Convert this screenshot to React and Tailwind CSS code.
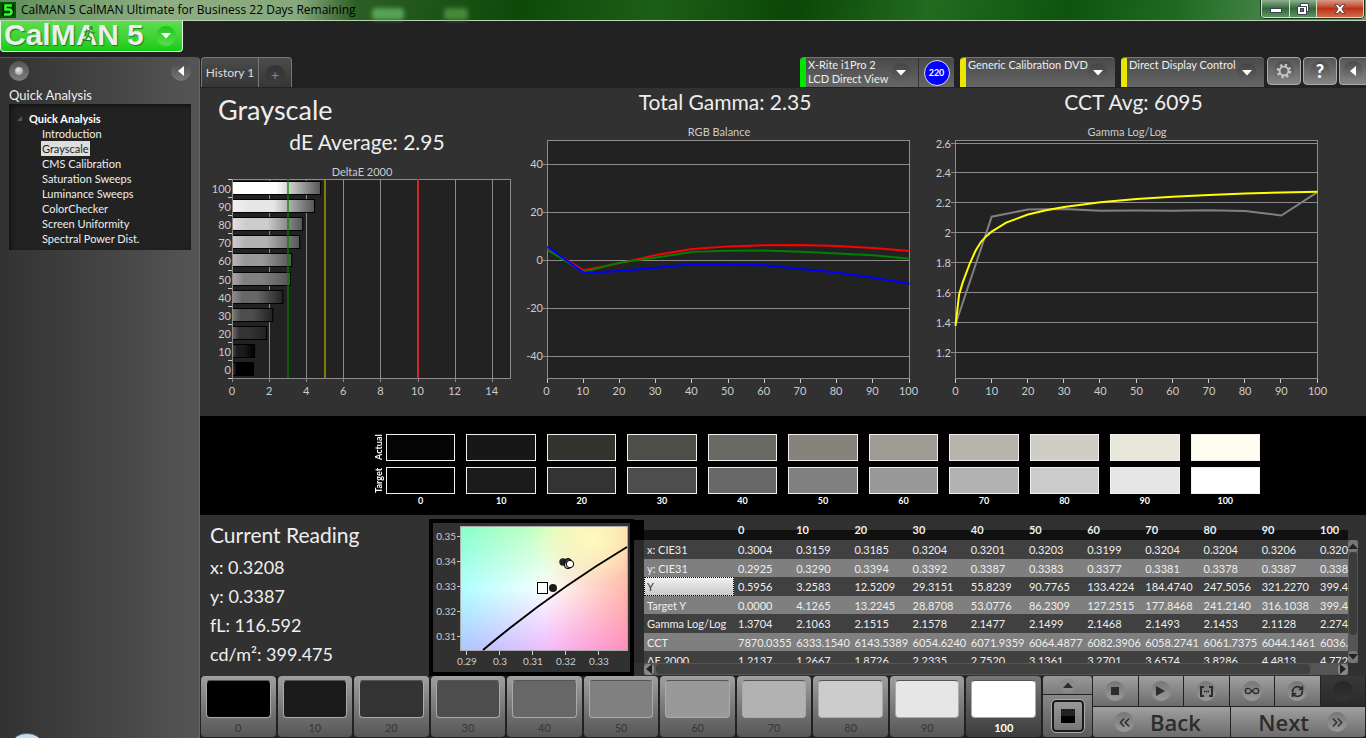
import React from "react"
import clsx from "clsx"
import { ChevronsLeft, ChevronsRight, Infinity as InfinityIcon, RefreshCw } from "lucide-react"

const Levels = [0, 10, 20, 30, 40, 50, 60, 70, 80, 90, 100];

const Pages = [
  "Introduction",
  "Grayscale",
  "CMS Calibration",
  "Saturation Sweeps",
  "Luminance Sweeps",
  "ColorChecker",
  "Screen Uniformity",
  "Spectral Power Dist."
]

const Actual = [
  "#040407", "#171717", "#33332d", "#4e4e48", "#6a6963", "#84827b",
  "#9d9b94", "#b6b4ab", "#cfcdc4", "#e9e7da", "#fffdf0"
]
const Target = [
  "#000000", "#1b1b1b", "#333333", "#4d4d4d", "#676767", "#808080",
  "#999999", "#b2b2b2", "#cccccc", "#e6e6e6", "#ffffff"
]
// left edge highlight of each DeltaE bar
const Highlight = [
  "#3c3c3c", "#4a4a4a", "#6a6a6a", "#7c7c7c", "#8c8c8c", "#a8a8a8",
  "#b8b8b8", "#cccccc", "#dedede", "#f0f0f0", "#ffffff"
]

const DeltaE = [1.16, 1.22, 1.86, 2.2, 2.74, 3.15, 3.22, 3.65, 3.81, 4.45, 4.78];

const RgbBalance = [
  { color: "#ff0000", values: [4.9, -4.3, -1.3, 2.1, 4.6, 5.7, 6.2, 6.3, 5.9, 5, 3.8] },
  { color: "#008000", values: [4.2, -5, -1.1, 1, 3.4, 3.9, 4, 3.5, 2.7, 2, 0.5] },
  { color: "#0000ff", values: [5.6, -5.3, -4.6, -3.2, -1.7, -1.9, -2.2, -3.8, -5.2, -7.4, -9.9] }
]

const GammaMeasured = [1.39, 2.11, 2.158, 2.162, 2.15, 2.152, 2.15, 2.153, 2.148, 2.118, 2.275];
const GammaTarget = [
  [0, 1.38], [1, 1.59], [2, 1.67], [4, 1.8], [5.5, 1.88], [7, 1.94], [8.5, 1.98], [10, 2.01],
  [14, 2.07], [20, 2.125], [25, 2.153], [30, 2.175], [40, 2.206], [50, 2.228],
  [60, 2.244], [70, 2.256], [80, 2.266], [90, 2.272], [100, 2.277]
]

const TableRows = [
  ["x: CIE31", "0.3004", "0.3159", "0.3185", "0.3204", "0.3201", "0.3203", "0.3199", "0.3204", "0.3204", "0.3206", "0.320"],
  ["y: CIE31", "0.2925", "0.3290", "0.3394", "0.3392", "0.3387", "0.3383", "0.3377", "0.3381", "0.3378", "0.3387", "0.338"],
  ["Y", "0.5956", "3.2583", "12.5209", "29.3151", "55.8239", "90.7765", "133.4224", "184.4740", "247.5056", "321.2270", "399.4"],
  ["Target Y", "0.0000", "4.1265", "13.2245", "28.8708", "53.0776", "86.2309", "127.2515", "177.8468", "241.2140", "316.1038", "399.4"],
  ["Gamma Log/Log", "1.3704", "2.1063", "2.1515", "2.1578", "2.1477", "2.1499", "2.1468", "2.1493", "2.1453", "2.1128", "2.274"],
  ["CCT", "7870.0355", "6333.1540", "6143.5389", "6054.6240", "6071.9359", "6064.4877", "6082.3906", "6058.2741", "6061.7375", "6044.1461", "6036."],
  ["ΔE 2000", "1.2137", "1.2667", "1.8726", "2.2335", "2.7520", "3.1361", "3.2701", "3.6574", "3.8286", "4.4813", "4.772"]
]

const DownArrow = ({ className }) => (
  <svg viewBox="0 0 10 6" className={ clsx("w-[10px] h-[6px]", className) }>
    <path d="M0 0H10L5 5.5Z" fill="currentColor"/>
  </svg>
)

const LeftArrow = ({ className }) => (
  <svg viewBox="0 0 6 10" className={ clsx("w-[6px] h-[10px]", className) }>
    <path d="M6 0V10L0 5Z" fill="currentColor"/>
  </svg>
)

const TitleBar = () => (
  <header className="flex items-start justify-between h-[21px] border-b border-[#b9d3b4] bg-[linear-gradient(100deg,#5f8f58_0%,#8fae83_12%,#86a87a_22%,#2c5f25_26%,#0d4a0a_38%,#1c5f18_48%,#0b4708_58%,#226b1f_68%,#0e5410_78%,#1f6a22_86%,#4c8850_94%,#6d9c6e_100%)]">
    <div className="flex items-center h-5">
      <svg viewBox="0 0 16 16" className="w-4 h-4">
        <rect width="16" height="16" fill="#022c02"/>
        <rect x="1" y="1" width="14" height="14" fill="none" stroke="#0a7a0a"/>
        <path d="M12 3.5H5.5V7.5H9Q11.5 7.5 11.5 10Q11.5 12.5 9 12.5H4" fill="none" stroke="#2bff2b" strokeWidth="2.6"/>
      </svg>
      <h1 className="pl-[5px] pr-2 text-[12px] leading-5 text-black font-['Open_Sans',sans-serif] whitespace-nowrap">
        CalMAN 5 CalMAN Ultimate for Business 22 Days Remaining
      </h1>
      <span className="w-8 h-3 mt-2 ml-2 rounded-sm bg-[#6cc06c]/70 blur-[2px]"/>
      <span className="w-6 h-3 mt-2 ml-10 rounded-sm bg-[#5aa04a]/70 blur-[2px]"/>
    </div>
    <div className="flex h-[18px] mr-[2px] border border-t-0 border-[#cfe0cd] rounded-b-[4px] overflow-hidden shadow-[0_0_0_1px_#16351a]">
      <button aria-label="Minimize" className="w-7 flex items-center justify-center border-r border-[#cfe0cd] bg-linear-to-b from-[#91b191] via-[#31683a] to-[#5f9262]">
        <svg viewBox="0 0 12 6" className="w-3 h-[6px] mt-1">
          <rect x="0.5" y="0.5" width="11" height="4" fill="#fff" stroke="#3c4350"/>
        </svg>
      </button>
      <button aria-label="Restore" className="w-[27px] flex items-center justify-center border-r border-[#cfe0cd] bg-linear-to-b from-[#91b191] via-[#31683a] to-[#5f9262]">
        <svg viewBox="0 0 12 12" className="w-3 h-3">
          <path d="M3.5 0.5H11.5V8.5H9.5V11.5H0.5V3.5H3.5Z" fill="#fff" stroke="#3c4350"/>
          <path d="M3.5 3.5H9.5V9" fill="none" stroke="#3c4350"/>
          <rect x="3.5" y="5.5" width="3" height="3" fill="#4d7c53" stroke="#3c4350"/>
        </svg>
      </button>
      <button aria-label="Close" className="w-[46px] flex items-center justify-center bg-linear-to-b from-[#d99a86] via-[#b93215] to-[#d2694b]">
        <svg viewBox="0 0 12 10" className="w-3 h-[10px]">
          <path d="M1 0.5H4L6 3L8 0.5H11L7.8 5L11 9.5H8L6 7L4 9.5H1L4.2 5Z" fill="#fff" stroke="#4a3038" strokeWidth="0.8"/>
        </svg>
      </button>
    </div>
  </header>
)

const Logo = () => (
  <button className="flex items-start justify-between w-[183px] h-[31px] pl-[3px] pr-[6px] border border-t-0 border-[#e5f7e2] rounded-b-[4px] bg-linear-to-b from-[#5fdc50] to-[#10cc10]">
    <span className="relative flex gap-[8px] text-[30px] leading-[28px] font-bold text-[#eceeec] font-['Liberation_Sans',Arial,sans-serif] [text-shadow:1px_1px_1px_#1b7a1b]">
      <span>CalMAN</span>
      <span>5</span>
      {/* runner standing in the second "A" */}
      <svg viewBox="0 0 14 17" className="absolute left-[78px] top-[5px] w-[14px] h-[17px]" fill="none" stroke="#2a9a2a" strokeWidth="1.5" strokeLinecap="round">
        <circle cx="9" cy="2" r="1.2" fill="#2a9a2a"/>
        <path d="M3 6L7 4.5L10 7L12.5 6.5M7.5 5L6 10L9.5 12L8.5 16M6 10L4 13L1 13.5"/>
      </svg>
    </span>
    <span className="w-5 h-5 mt-[5px] rounded-full bg-linear-to-b from-[#16c516] to-[#55e04a] flex items-center justify-center">
      <DownArrow className="text-white"/>
    </span>
  </button>
)

const Sidebar = () => (
  <aside className="w-[200px] shrink-0 flex flex-col rounded-tr-[4px] border-t border-r border-t-[#555] border-r-[#666] bg-linear-to-r from-[#323232] to-[#555]">
    <div className="flex justify-between px-2 pt-[3px]">
      <button aria-label="Record" className="w-5 h-5 ml-[1px] rounded-full bg-linear-to-b from-[#555] to-[#7d7d7d] flex items-center justify-center">
        <span className="w-2 h-2 rounded-full bg-[radial-gradient(circle_at_40%_35%,#e8e8e8,#8b8b8b)]"/>
      </button>
      <button aria-label="Collapse" className="w-5 h-5 rounded-full bg-linear-to-b from-[#4c4c4c] to-[#777] flex items-center justify-center">
        <LeftArrow className="text-white"/>
      </button>
    </div>
    <h2 className="pt-[5px] pl-[9px] text-[13px] leading-[18px] text-[#eee]">Quick Analysis</h2>
    <nav className="ml-[9px] mr-2 pt-[7px] pb-1 bg-[#222] shadow-[inset_2px_2px_4px_#111]">
      <p className="flex items-center pl-2 text-[11px] leading-[15px] font-bold text-white">
        <svg viewBox="0 0 5 5" className="w-[5px] h-[5px] mr-[7px]">
          <path d="M5 0V5H0Z" fill="#555"/>
        </svg>
        Quick Analysis
      </p>
      <ul className="text-[11px] leading-[15px] text-[#eee]">
        { Pages.map(p => (
            <li key={ p } className="pl-8">
              <a href="#"
                className={ clsx("inline-block px-[1px] h-[15px] align-top", {
                  "bg-[#dedede] text-[#222]": p === "Grayscale"
                }) }
              >
                { p }
              </a>
            </li>
          ))
        }
      </ul>
    </nav>
    <svg viewBox="0 0 26 5" className="w-[26px] h-[5px] mt-auto ml-[14px]">
      <ellipse cx="13" cy="9" rx="14" ry="8.5" fill="#c9dcec" stroke="#2f6a9c"/>
    </svg>
  </aside>
)

const DeviceTab = ({ color, lines, className, children }) => (
  <div className={ clsx("flex h-[30px] border-t border-[#777] rounded-t-[4px] overflow-hidden bg-linear-to-b from-[#4a4a4a] to-[#666]", className) }>
    <span className={ clsx("w-[6px] shrink-0", color) }/>
    <button className="flex-1 flex justify-between pl-[2px] pr-[7px] text-left">
      <span className="text-[11px] leading-[14px] text-[#eee] whitespace-nowrap">
        { lines.map(l => <span key={ l } className="block">{ l }</span>) }
      </span>
      <span className="w-5 h-5 mt-[5px] -ml-1 shrink-0 rounded-full bg-linear-to-b from-[#444] to-[#626262] flex items-center justify-center">
        <DownArrow className="text-white"/>
      </span>
    </button>
    { children }
  </div>
)

const ToolButton = ({ label, className, children }) => (
  <button aria-label={ label }
    className={ clsx("h-7 shrink-0 border border-[#aaa] rounded-[4px] bg-linear-to-b from-[#555] to-[#858585] flex items-center justify-center", className) }
  >
    <span className="w-5 h-5 rounded-full bg-linear-to-b from-[#4a4a4a] to-[#808080] text-white flex items-center justify-center">
      { children }
    </span>
  </button>
)

const TabBar = () => (
  <div className="flex justify-between h-[31px] pl-[1px] border-b border-[#222]">
    <div className="flex border border-b-0 border-[#777] rounded-t-[4px] bg-linear-to-b from-[#4c4c4c] to-[#363636] overflow-hidden">
      <button className="w-[57px] text-[12px] text-[#ddd] border-r border-[#777] whitespace-nowrap">History 1</button>
      <button aria-label="Add tab" className="w-8 flex items-center justify-center">
        <span className="w-5 h-5 mt-1 rounded-full bg-linear-to-b from-[#333] to-[#3d3d3d] text-[14px] leading-5 text-[#888]">+</span>
      </button>
    </div>
    <div className="flex">
      <DeviceTab color="bg-[#00e600]" lines={ ["X-Rite i1Pro 2", "LCD Direct View"] } className="w-[154px]">
        <span className="w-9 shrink-0 border-l border-[#333] flex items-center justify-center">
          <span className="w-[26px] h-[26px] rounded-full bg-[#0000ff] border border-[#ddd] text-[9px] leading-6 font-bold text-white text-center">220</span>
        </span>
      </DeviceTab>
      <DeviceTab color="bg-[#ece600]" lines={ ["Generic Calibration DVD"] } className="w-[155px] ml-[6px]"/>
      <DeviceTab color="bg-[#ece600]" lines={ ["Direct Display Control"] } className="w-[143px] ml-[6px]"/>
      <ToolButton label="Settings" className="w-[34px] ml-[3px]">
        <svg viewBox="0 0 16 16" className="w-4 h-4" fill="none" stroke="#c8c8c8">
          <circle cx="8" cy="8" r="6" strokeWidth="2.6" strokeDasharray="2.35 2.36"/>
          <circle cx="8" cy="8" r="4.4" strokeWidth="1.8"/>
        </svg>
      </ToolButton>
      <ToolButton label="Help" className="w-[34px] ml-[2px]">
        <span className="text-[18px] leading-5 font-black">?</span>
      </ToolButton>
      <ToolButton label="Collapse panel" className="w-[27px] ml-[2px] border-r-0 rounded-r-none">
        <LeftArrow/>
      </ToolButton>
    </div>
  </div>
)

const GridColor = "#8c8c8c";

const DeltaChart = () => {
  const x = v => 32 + v * 18.55;
  const rowY = i => 24 + (10 - i) * 18.1;
  return (
    <svg viewBox="0 0 325 260" className="w-full" fontSize="11" fill="#ccc">
      <defs>
        { Target.map((c, i) => (
            <linearGradient key={ c } id={ `bar-${ i }` }>
              <stop offset="0" stopColor={ Highlight[i] }/>
              <stop offset="0.2" stopColor={ c }/>
              <stop offset="0.5" stopColor={ c }/>
              <stop offset="1" stopColor={ i > 4 ? "#555" : i > 1 ? "#222" : "#000" }/>
            </linearGradient>
          ))
        }
      </defs>
      <text x="162" y="20" textAnchor="middle">DeltaE 2000</text>
      <rect x="32.5" y="23.5" width="278" height="199" fill="#222" stroke={ GridColor }/>
      { [0, 2, 4, 6, 8, 10, 12, 14].map(v => (
          <g key={ v }>
            <path d={ `M${ Math.round(x(v)) + 0.5 } 24V226` } stroke={ GridColor }/>
            <text x={ x(v) } y="239" textAnchor="middle">{ v }</text>
          </g>
        ))
      }
      { Levels.map((l, i) => (
          <g key={ l }>
            <path d={ `M28 ${ Math.round(rowY(i)) - 0.5 }H32` } stroke="#ccc"/>
            <rect x="32.5" y={ Math.round(rowY(i)) + 1.5 } width={ x(DeltaE[i]) - 32.5 } height="13" fill={ `url(#bar-${ i })` } stroke="#000"/>
            <text x="31" y={ rowY(i) + 13 } textAnchor="end">{ l }</text>
          </g>
        ))
      }
      <path d="M28 222.5H32" stroke="#ccc"/>
      <path d="M32.5 24V222" stroke={ GridColor }/>
      <path d="M88 23V222" stroke="#008000" strokeWidth="2" opacity="0.65"/>
      <path d="M125 23V222" stroke="#a39a00" strokeWidth="2" opacity="0.75"/>
      <path d="M218 23V222" stroke="#d02828" strokeWidth="2"/>
    </svg>
  )
}

const toPath = points => "M" + points.map(p => p.join(" ")).join("L");

const BalanceChart = () => {
  const x = v => 22.5 + v * 3.62;
  const y = v => 144 - v * 2.39;
  return (
    <svg viewBox="0 0 400 300" className="w-full" fontSize="11" fill="#ccc">
      <text x="194" y="20" textAnchor="middle">RGB Balance</text>
      <rect x="22.5" y="24.5" width="362" height="238" fill="#222" stroke={ GridColor }/>
      { [40, 20, 0, -20, -40].map(v => (
          <g key={ v }>
            <path d={ `M18 ${ Math.round(y(v)) + 0.5 }H384` } stroke={ GridColor }/>
            <text x="18" y={ y(v) + 4 } textAnchor="end">{ v }</text>
          </g>
        ))
      }
      { Levels.map(l => (
          <g key={ l }>
            <path d={ `M${ Math.round(x(l)) - 0.5 } 263V267` } stroke="#ccc"/>
            <text x={ x(l) - 1 } y="279" textAnchor="middle">{ l }</text>
          </g>
        ))
      }
      { RgbBalance.map(s => (
          <path key={ s.color }
            d={ toPath(s.values.map((v, i) => [x(i * 10), y(v)])) }
            fill="none" stroke={ s.color } strokeWidth="2"/>
        ))
      }
    </svg>
  )
}

const GammaChart = () => {
  const x = v => 30.5 + v * 3.62;
  const y = v => 27.5 + (2.6 - v) * 149.4;
  return (
    <svg viewBox="0 0 441 300" className="w-full" fontSize="11" fill="#ccc">
      <text x="202" y="20" textAnchor="middle">Gamma Log/Log</text>
      <rect x="30.5" y="24.5" width="362" height="238" fill="#222" stroke={ GridColor }/>
      { [2.6, 2.4, 2.2, 2, 1.8, 1.6, 1.4, 1.2].map(v => (
          <g key={ v }>
            <path d={ `M26 ${ Math.round(y(v)) - 0.5 }H392` } stroke={ GridColor }/>
            <text x="26" y={ y(v) + 4 } textAnchor="end">{ v }</text>
          </g>
        ))
      }
      { Levels.map(l => (
          <g key={ l }>
            <path d={ `M${ Math.round(x(l)) - 0.5 } 263V267` } stroke="#ccc"/>
            <text x={ x(l) } y="279" textAnchor="middle">{ l }</text>
          </g>
        ))
      }
      <path d={ toPath(GammaMeasured.map((v, i) => [x(i * 10), y(v)])) } fill="none" stroke="#808080" strokeWidth="2"/>
      <path d={ toPath(GammaTarget.map(([l, v]) => [x(l), y(v)])) } fill="none" stroke="#ffff00" strokeWidth="2"/>
    </svg>
  )
}

const Charts = () => (
  <section className="flex items-start bg-[#313131] text-[#eee]">
    <div className="flex-[325] pt-[2px]">
      <h2 className="pl-[18px] text-[27px] leading-10">Grayscale</h2>
      <h3 className="pl-[9px] mb-[2px] text-center text-[21px] leading-6">dE Average: 2.95</h3>
      <DeltaChart />
    </div>
    <div className="flex-[400] pt-[2px]">
      <h3 className="mb-[2px] text-center text-[21px] leading-6">Total Gamma: 2.35</h3>
      <BalanceChart />
    </div>
    <div className="flex-[441] pt-[2px]">
      <h3 className="mb-[2px] pr-6 text-center text-[21px] leading-6">CCT Avg: 6095</h3>
      <GammaChart />
    </div>
  </section>
)

const SwatchRow = ({ label, colors }) => (
  <div className="flex h-[27px]">
    <span className="w-[14px] shrink-0 rotate-180 [writing-mode:vertical-rl] text-[9px] leading-[14px] font-bold text-center">
      { label }
    </span>
    <div className="flex-1 grid grid-cols-11 gap-[11px]">
      { colors.map(c => (
          <span key={ c } className="border border-[#f0f0f0]" style={ { backgroundColor: c } }/>
        ))
      }
    </div>
  </div>
)

const Swatches = () => (
  <section className="h-[99px] pt-[18px] pl-[172px] pr-[106px] bg-black text-white">
    <div className="flex flex-col gap-[6px]">
      <SwatchRow label="Actual" colors={ Actual }/>
      <SwatchRow label="Target" colors={ Target }/>
    </div>
    <div className="grid grid-cols-11 gap-[11px] pl-[14px] text-center text-[9px] leading-[14px] font-bold">
      { Levels.map(l => <span key={ l }>{ l }</span>) }
    </div>
  </section>
)

const CieChart = () => (
  <div className="w-[205px] shrink-0 mt-1 border-4 border-black bg-[#313131]">
    <svg viewBox="0 0 197 148" className="w-full" fontSize="10" fill="#ccc">
      <defs>
        <linearGradient id="cie-left" x1="0" y1="0" x2="0" y2="1">
          <stop offset="0" stopColor="#86ffcb"/>
          <stop offset="0.5" stopColor="#aeffff"/>
          <stop offset="1" stopColor="#aac6ff"/>
        </linearGradient>
        <linearGradient id="cie-mid" x1="0" y1="0" x2="0" y2="1">
          <stop offset="0" stopColor="#d2ffc0"/>
          <stop offset="0.5" stopColor="#ffffff"/>
          <stop offset="1" stopColor="#f6bcff"/>
        </linearGradient>
        <linearGradient id="cie-right" x1="0" y1="0" x2="0" y2="1">
          <stop offset="0" stopColor="#ffd9a6"/>
          <stop offset="0.5" stopColor="#ffb8a8"/>
          <stop offset="1" stopColor="#ff8dba"/>
        </linearGradient>
        <linearGradient id="fade-left">
          <stop offset="0" stopColor="#fff"/>
          <stop offset="0.55" stopColor="#000"/>
        </linearGradient>
        <linearGradient id="fade-right">
          <stop offset="0.5" stopColor="#000"/>
          <stop offset="1" stopColor="#fff"/>
        </linearGradient>
        <radialGradient id="cie-yellow" cx="0.78" cy="0.1" r="0.35">
          <stop offset="0" stopColor="#fffac0"/>
          <stop offset="1" stopColor="#fffac0" stopOpacity="0"/>
        </radialGradient>
        <mask id="mask-left"><rect x="26" y="2" width="168" height="125" fill="url(#fade-left)"/></mask>
        <mask id="mask-right"><rect x="26" y="2" width="168" height="125" fill="url(#fade-right)"/></mask>
      </defs>
      <g transform="translate(1 1)">
        <rect x="27" y="3" width="166" height="123" fill="url(#cie-mid)"/>
        <rect x="27" y="3" width="166" height="123" fill="url(#cie-left)" mask="url(#mask-left)"/>
        <rect x="27" y="3" width="166" height="123" fill="url(#cie-right)" mask="url(#mask-right)"/>
        <rect x="27" y="3" width="166" height="123" fill="url(#cie-yellow)"/>
        <rect x="26.5" y="2.5" width="167" height="124" fill="none" stroke="#aaa"/>
        <path d="M49 126Q118 68 193 23" fill="none" stroke="#000" strokeWidth="2"/>
        <circle cx="129" cy="38" r="3.7" fill="#222"/>
        <circle cx="134" cy="38" r="3.5" fill="#444" stroke="#000"/>
        <circle cx="134" cy="41" r="3.7" fill="#bbb" stroke="#000"/>
        <circle cx="136" cy="40" r="3.7" fill="#fff" stroke="#000"/>
        <rect x="103.5" y="58.5" width="10" height="11" fill="#fff" stroke="#000"/>
        <circle cx="119" cy="64" r="4" fill="#1a1a1a"/>
        { ["0.35", "0.34", "0.33", "0.32", "0.31"].map((v, i) => (
            <g key={ v }>
              <path d={ `M23 ${ 12.5 + i * 25 }H26` } stroke="#ccc"/>
              <text x="22" y={ 16 + i * 25 } textAnchor="end">{ v }</text>
            </g>
          ))
        }
        { ["0.29", "0.3", "0.31", "0.32", "0.33"].map((v, i) => (
            <g key={ v }>
              <path d={ `M${ 32.5 + i * 33 } 127V131` } stroke="#ccc"/>
              <text x={ 33 + i * 33 } y="141" textAnchor="middle">{ v }</text>
            </g>
          ))
        }
      </g>
    </svg>
  </div>
)

const ReadingsTable = () => (
  <div className="flex-1 min-w-0 mt-[5px] mr-2 flex flex-col h-[155px]">
    <div className="flex-1 min-h-0 flex">
      <div className="w-[10px] shrink-0 border-t-[20px] border-black bg-[#2a2a2a]"/>
      <div className="flex-1 min-w-0 overflow-hidden">
        <table className="w-full table-fixed border-collapse text-[11px] text-[#eee] whitespace-nowrap">
          <thead>
            <tr className="h-5 bg-[linear-gradient(#303030_50%,#101010_50%)]">
              <th className="w-[90px]"/>
              { Levels.map(l => (
                  <th key={ l } className={ clsx("p-0 pl-1 text-left font-bold", { "w-8": l === 100 }) }>
                    { l }
                  </th>
                ))
              }
            </tr>
          </thead>
          <tbody>
            { TableRows.map(([name, ...values], r) => (
                <tr key={ name } className={ clsx(r % 2 ? "h-[18px] bg-[#7f7f7f]" : "h-[19px] bg-[#404040]") }>
                  <th className={ clsx("p-0 pl-[3px] text-left font-normal leading-[17px]", {
                      "bg-linear-to-b from-[#f2f2f2] to-[#c8c8c8] text-[#333] outline outline-dotted -outline-offset-1 outline-black": name === "Y"
                    }) }
                  >
                    { name }
                  </th>
                  { values.map((v, i) => (
                      <td key={ i } className="p-0 pl-1 leading-[17px]">{ v }</td>
                    ))
                  }
                </tr>
              ))
            }
          </tbody>
        </table>
      </div>
      <div className="w-[10px] shrink-0 mt-5 flex flex-col items-center bg-[#555]">
        <button aria-label="Scroll up" className="w-[10px] h-3 rounded-sm bg-[#777] flex items-center justify-center">
          <DownArrow className="w-[6px] h-[4px] rotate-180 text-[#222]"/>
        </button>
        <span className="w-2 h-[83px] rounded bg-[#3c3c3c]"/>
        <button aria-label="Scroll down" className="w-[10px] h-3 mt-auto rounded-sm bg-[#777] flex items-center justify-center">
          <DownArrow className="w-[6px] h-[4px] text-[#222]"/>
        </button>
      </div>
    </div>
    <div className="h-3 ml-[10px] mr-[10px] flex items-center bg-[#555]">
      <button aria-label="Scroll left" className="w-[10px] h-[11px] rounded-sm bg-[#888] flex items-center justify-center">
        <LeftArrow className="w-1 h-[7px] text-[#222]"/>
      </button>
      <span className="flex-1 h-[10px] ml-[2px] mr-[28px] rounded bg-[#404040]"/>
      <button aria-label="Scroll right" className="w-[10px] h-[11px] rounded-sm bg-[#888] flex items-center justify-center">
        <LeftArrow className="w-1 h-[7px] rotate-180 text-[#222]"/>
      </button>
    </div>
  </div>
)

const Readings = () => (
  <section className="flex h-[161px] bg-[#313131] text-[#eee]">
    <div className="w-[229px] shrink-0 pl-[10px] pt-[4px]">
      <h2 className="mb-[2px] text-[21px] leading-8">Current Reading</h2>
      <ul className="text-[18px] leading-[29px]">
        <li>x: 0.3208</li>
        <li>y: 0.3387</li>
        <li>fL: 116.592</li>
        <li>cd/m²: 399.475</li>
      </ul>
    </div>
    <CieChart />
    <ReadingsTable />
  </section>
)

const LevelButton = ({ level, color, active }) => (
  <button className={ clsx(
      "flex-1 flex flex-col pt-[4px] px-[5px] rounded-[4px] bg-linear-to-b text-[11px]",
      active ? "from-[#777] to-[#3c3c3c] text-white font-bold" : "from-[#a0a0a0] to-[#565656] text-[#3a3a3a] font-medium"
    ) }
  >
    <span className="w-full h-[38px] rounded-[4px] border border-[#aaa] border-t-[#555]" style={ { backgroundColor: color } }/>
    <span className="w-full pt-[1px] text-center leading-[18px]">{ level }</span>
  </button>
)

const ControlButton = ({ label, disabled, children }) => (
  <button aria-label={ label } disabled={ disabled }
    className={ clsx("flex-1 flex items-center justify-center bg-linear-to-b", disabled ? "from-[#383838] to-[#2a2a2a]" : "from-[#a0a0a0] to-[#6c6c6c]") }
  >
    <span className={ clsx("w-5 h-5 rounded-full bg-linear-to-b flex items-center justify-center text-[#2c2c2c]", disabled ? "from-[#262626] to-[#333]" : "from-[#777] to-[#999]") }>
      { children }
    </span>
  </button>
)

const Transport = () => (
  <footer className="flex h-[62px] pl-[1px] pb-[1px]">
    <div className="flex-1 flex gap-[2px] pr-[1px]">
      { Levels.map((l, i) => (
          <LevelButton key={ l } level={ l } color={ Target[i] } active={ l === 100 }/>
        ))
      }
    </div>
    <div className="w-[49px] shrink-0 ml-[1px] flex flex-col gap-[1px] rounded-[3px] overflow-hidden">
      <button aria-label="Expand" className="h-[18px] bg-linear-to-b from-[#999] to-[#7c7c7c] flex items-center justify-center">
        <span className="w-[15px] h-[15px] rounded-full bg-[#8a8a8a] flex items-center justify-center">
          <DownArrow className="w-2 h-[5px] rotate-180 text-[#2c2c2c]"/>
        </span>
      </button>
      <button aria-label="Pattern window" className="flex-1 bg-linear-to-b from-[#888] to-[#5a5a5a] flex items-center justify-center">
        <span className="w-8 h-8 rounded-[4px] border-2 border-[#1a1a1a] outline outline-[#aaa] bg-linear-to-b from-[#999] to-[#777] flex items-center justify-center">
          <span className="w-[14px] h-[14px] bg-[linear-gradient(#222_50%,#000_50%)]"/>
        </span>
      </button>
    </div>
    <div className="w-[272px] shrink-0 ml-[1px] mr-[1px] flex flex-col gap-[1px]">
      <div className="flex h-[30px] gap-[1px]">
        <ControlButton label="Stop"><span className="w-2 h-2 bg-[#2c2c2c]"/></ControlButton>
        <ControlButton label="Play">
          <svg viewBox="0 0 9 10" className="w-[9px] h-[10px]"><path d="M0 0L9 5L0 10Z" fill="currentColor"/></svg>
        </ControlButton>
        <ControlButton label="Read series">
          <svg viewBox="0 0 13 11" className="w-[13px] h-[11px]" fill="none" stroke="currentColor" strokeWidth="2">
            <path d="M4 1H1V10H4M9 1H12V10H9"/>
            <path d="M4 5.5H9" strokeWidth="1.6" strokeDasharray="1.4 0.5"/>
          </svg>
        </ControlButton>
        <ControlButton label="Read continuously"><InfinityIcon size={ 16 }/></ControlButton>
        <ControlButton label="Refresh"><RefreshCw size={ 13 } strokeWidth={ 3.5 }/></ControlButton>
        <ControlButton label="Idle" disabled/>
      </div>
      <div className="flex flex-1 gap-[1px] text-[22px] leading-[30px] text-[#2c2c2c] font-['Open_Sans',sans-serif] font-semibold">
        <button className="flex-1 flex items-center pl-[21px] gap-4 bg-linear-to-b from-[#a0a0a0] to-[#6c6c6c] rounded-bl-[3px]">
          <span className="w-5 h-5 rounded-full bg-linear-to-b from-[#777] to-[#999] flex items-center justify-center"><ChevronsLeft size={ 17 }/></span>
          Back
        </button>
        <button className="flex-1 flex items-center justify-end pr-[18px] gap-[18px] bg-linear-to-b from-[#a0a0a0] to-[#6c6c6c] rounded-br-[3px]">
          Next
          <span className="w-5 h-5 rounded-full bg-linear-to-b from-[#777] to-[#999] flex items-center justify-center"><ChevronsRight size={ 17 }/></span>
        </button>
      </div>
    </div>
  </footer>
)

const App = () => (
  <div className="min-h-screen flex flex-col bg-[#222] font-['Lato',sans-serif]">
    <TitleBar />
    <div className="h-9">
      <Logo />
    </div>
    <div className="flex flex-1">
      <Sidebar />
      <main className="flex-1 min-w-0 flex flex-col">
        <TabBar />
        <Charts />
        <Swatches />
        <Readings />
        <Transport />
      </main>
    </div>
  </div>
)
export default App
